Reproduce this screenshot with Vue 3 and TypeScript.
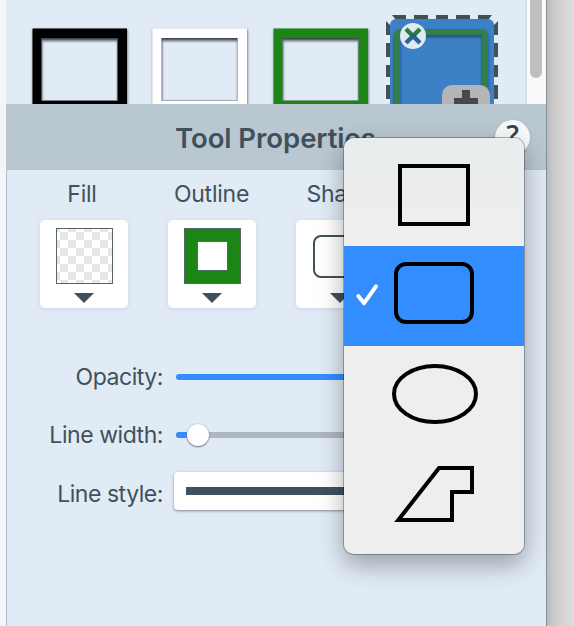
<script setup lang="ts">
import { ref } from 'vue'

type Shape = 'rectangle' | 'rounded' | 'ellipse' | 'polygon'

const shapes: Shape[] = ['rectangle', 'rounded', 'ellipse', 'polygon']
const selected = ref<Shape>('rounded')
const presets = ['#000000', '#ffffff', '#1b8516']
const lineWidth = ref(11)
</script>

<template>
  <div class="window">
    <main class="panel">
      <section class="tools">
        <div class="presets">
          <svg v-for="(color, i) in presets" :key="color" class="preset" viewBox="0 0 96 80">
            <defs>
              <filter :id="'soft' + i" x="-10%" y="-10%" width="120%" height="130%">
                <feDropShadow dx="0.5" dy="1" stdDeviation="0.8" flood-color="#111827" flood-opacity="0.65" />
              </filter>
              <linearGradient :id="'inner' + i" x1="0" y1="0" x2="0" y2="1">
                <stop offset="0" stop-color="#2e343c" stop-opacity="0.9" />
                <stop offset="0.35" stop-color="#4c545e" stop-opacity="0.75" />
                <stop offset="1" stop-color="#8b949e" stop-opacity="0" />
              </linearGradient>
            </defs>
            <path d="M.5 .5H95V82H.5ZM9.5 10V72.700H85.500V10Z" fill-rule="evenodd" :fill="color" :filter="`url(#soft${i})`" />
            <rect x="9.500" y="10" width="76" height="5.500" :fill="`url(#inner${i})`" />
            <path d="M9.800 10V72.500H85.300V10" fill="none" stroke="#59616b" stroke-opacity="0.45" />
          </svg>
          <svg class="active-preset" viewBox="0 0 112 89">
            <defs>
              <filter id="edge" x="-10%" y="-10%" width="120%" height="120%">
                <feDropShadow dx="0" dy="2" stdDeviation="1.700" flood-color="#16345a" flood-opacity="0.7" />
              </filter>
              <linearGradient id="cross" x1="0" y1="12" x2="0" y2="29" gradientUnits="userSpaceOnUse">
                <stop offset="0" stop-color="#2b7f3c" />
                <stop offset="0.35" stop-color="#2b7f3c" />
                <stop offset="0.5" stop-color="#2a5a80" />
                <stop offset="1" stop-color="#2f69a7" />
              </linearGradient>
            </defs>
            <g fill="#40515a">
              <path d="M6 0H20V5H10ZM28 0H42V5H28ZM50 0H62V5H50ZM70 0H84V5H70ZM92 0H106L102 5H92Z" />
              <path d="M0 6L5 11V20H0ZM0 28H5V42H0ZM0 50H5V62H0ZM0 70H5V84H0Z" />
              <path d="M112 6L107 11V20H112ZM112 28H107V42H112ZM112 50H107V62H112ZM112 70H107V84H112Z" />
            </g>
            <rect x="4" y="4" width="104" height="100" rx="6" fill="#3c80c6" />
            <rect x="11" y="17" width="88" height="92" rx="3" fill="none" stroke="#327f4d" stroke-width="6" filter="url(#edge)" />
            <circle cx="27" cy="21" r="13" fill="#e0eaf2" />
            <path d="M20 14L34 28M34 14L20 28" stroke="url(#cross)" stroke-width="4.500" />
            <rect x="56" y="70" width="48" height="40" rx="10" fill="#b5b5b5" />
            <path d="M68 83H76V75H84V83H92V90H68Z" fill="#484848" />
          </svg>
        </div>
        <div class="scroll-track"><div class="scroll-thumb"></div></div>
      </section>

      <header class="header">
        <h1>Tool Properties</h1>
        <button class="help" type="button">?</button>
      </header>

      <section class="properties">
        <div class="swatches">
          <div class="property">
            <span class="label label-fill">Fill</span>
            <div class="card">
              <div class="swatch checker"></div>
              <svg class="arrow" viewBox="0 0 20 10"><path d="M0 0H20L10 10Z" /></svg>
            </div>
          </div>
          <div class="property">
            <span class="label label-outline">Outline</span>
            <div class="card">
              <div class="swatch green"><div class="hole"></div></div>
              <svg class="arrow" viewBox="0 0 20 10"><path d="M0 0H20L10 10Z" /></svg>
            </div>
          </div>
          <div class="property">
            <span class="label label-shape">Shape</span>
            <div class="card">
              <div class="swatch shape-swatch"><div class="mini-shape"></div></div>
              <svg class="arrow" viewBox="0 0 20 10"><path d="M0 0H20L10 10Z" /></svg>
            </div>
          </div>
        </div>

        <div class="settings">
          <div class="row">
            <span class="label">Opacity:</span>
            <div class="slider full"></div>
          </div>
          <div class="row">
            <span class="label">Line width:</span>
            <div class="slider">
              <div class="slider-value" :style="{ width: lineWidth + 'px' }"></div>
              <div class="knob"></div>
            </div>
          </div>
          <div class="row style-row">
            <span class="label style-label">Line style:</span>
            <div class="select"><div class="line-sample"></div></div>
          </div>
        </div>
      </section>
    </main>
    <aside class="backdrop"></aside>

    <div class="menu">
      <div
        v-for="shape in shapes"
        :key="shape"
        class="item"
        :class="{ chosen: shape === selected }"
        @click="selected = shape"
      >
        <svg viewBox="0 0 180 100">
          <path v-if="shape === selected" class="check" d="M14.300 50L20.100 57.200L32 40.400" />
          <rect v-if="shape === 'rectangle'" x="56" y="20" width="68" height="58" />
          <rect v-else-if="shape === 'rounded'" x="52" y="18" width="76" height="58" rx="10" />
          <ellipse v-else-if="shape === 'ellipse'" cx="91" cy="48" rx="41" ry="28" />
          <path v-else d="M95 22H128V46H108V74H54.300Z" />
        </svg>
      </div>
    </div>
  </div>
</template>

<style>
body {
  margin: 0;
  overflow: hidden;
}
</style>

<style scoped>
* {
  box-sizing: border-box;
}
.window {
  position: relative;
  display: flex;
  width: 574px;
  height: 626px;
  padding-left: 6px;
  overflow: hidden;
  background: #f4f5f8;
  color: #40515c;
  font-family: Inter, 'Liberation Sans', sans-serif;
}
.panel {
  flex: none;
  width: 540px;
  background: #e1ebf6;
}
.backdrop {
  flex: 1;
  border-left: 1px solid #858c94;
  background: linear-gradient(90deg, #bdbdbd, #cecece 35%, #dedede);
}
.tools {
  display: flex;
  height: 104px;
  overflow: hidden;
}
.presets {
  display: flex;
  flex: 1;
  gap: 24.500px;
  padding: 28px 0 0 25.500px;
  overflow: hidden;
}
.preset {
  flex: none;
  width: 96px;
  height: 80px;
  overflow: visible;
}
.active-preset {
  flex: none;
  width: 112px;
  height: 89px;
  margin: -13px 0 0 -7px;
}
.scroll-track {
  display: flex;
  justify-content: center;
  width: 21px;
  padding-right: 1px;
  border-left: 2px solid #d9dee6;
  background: #fafafa;
}
.scroll-thumb {
  width: 12px;
  height: 78px;
  border-radius: 0 0 6px 6px;
  background: #bfbfbf;
}
.header {
  display: flex;
  align-items: center;
  justify-content: space-between;
  height: 66px;
  padding: 0 16px 0 169px;
  background: #b9c7d1;
}
h1 {
  margin: 0;
  padding-top: 2px;
  font-size: 27.500px;
  font-weight: 600;
  line-height: 34px;
  letter-spacing: -0.050px;
  white-space: nowrap;
}
.help {
  width: 35px;
  height: 35px;
  padding: 0 0 5px;
  border: 0;
  border-radius: 50%;
  background: #f7f9fb;
  box-shadow: 0 1px 3px #7d8c9a88;
  color: #34454e;
  font: 600 28px/28px 'Open Sans', sans-serif;
}
.properties {
  height: 456px;
  padding-top: 9px;
  border-left: 1px solid #aebfd0;
}
.swatches {
  display: flex;
  gap: 40px;
  padding-left: 33px;
}
.property {
  display: flex;
  flex-direction: column;
  gap: 11px;
  align-items: center;
  width: 88px;
}
.label {
  font-size: 23px;
  line-height: 30px;
  letter-spacing: -0.250px;
  white-space: nowrap;
}
.label-fill {
  margin-right: 4px;
}
.label-outline {
  margin-right: 1px;
}
.label-shape {
  letter-spacing: -0.400px;
}
.card {
  display: flex;
  flex-direction: column;
  align-items: center;
  gap: 9px;
  width: 88px;
  height: 88px;
  padding-top: 8px;
  border-radius: 5px;
  background: #fff;
  box-shadow: 0 1px 5px #8aa0b844;
}
.swatch {
  width: 57px;
  height: 56px;
  border: 1px solid #56646c;
}
.checker {
  background: repeating-conic-gradient(#fff 0 25%, #e6e6e6 0 50%) 3px 3px / 16px 16px;
}
.green {
  display: grid;
  place-items: center;
  background: #1b8516;
}
.hole {
  width: 31px;
  height: 30px;
  border: 1px solid #48705a;
  background: #fff;
}
.shape-swatch {
  display: grid;
  place-items: center;
  border: 0;
}
.mini-shape {
  width: 54px;
  height: 43px;
  border: 2.500px solid #40515c;
  border-radius: 8px;
}
.arrow {
  width: 20px;
  height: 10px;
  fill: #40515c;
}
.settings {
  display: flex;
  flex-direction: column;
  gap: 28px;
  padding: 54px 30px 0 0;
}
.row {
  display: grid;
  grid-template-columns: 156px 1fr;
  align-items: center;
  gap: 13px;
  height: 30px;
}
.row .label {
  letter-spacing: -0.450px;
  text-align: right;
}
.slider {
  display: flex;
  align-items: center;
  height: 6px;
  border-radius: 3px;
  background: #afb8bf;
}
.full {
  background: #348dff;
}
.slider-value {
  height: 6px;
  border-radius: 3px 0 0 3px;
  background: #348dff;
}
.knob {
  flex: none;
  width: 22px;
  height: 22px;
  border-radius: 50%;
  background: #fff;
  box-shadow: 0 1px 2px #6c747c, 0 0 1px #8d949b;
}
.style-row {
  gap: 11px;
  height: 38px;
  margin-top: -6px;
}
.style-label {
  padding-top: 6px;
}
.select {
  height: 38px;
  padding: 15px 12px;
  border-radius: 4px;
  background: #fff;
  box-shadow: 0 1px 3px #7f8995;
}
.line-sample {
  height: 8px;
  background: #40515c;
}
.menu {
  position: absolute;
  top: 138px;
  left: 344px;
  width: 180px;
  height: 416px;
  padding: 8px 0;
  border-radius: 10px;
  background: linear-gradient(#e9eded, #eee 25%);
  box-shadow: 0 0 0 1px #00000047, 0 10px 26px #00000057;
}
.item {
  height: 100px;
}
.item svg {
  display: block;
  width: 180px;
  height: 100px;
  fill: none;
  stroke: #000;
  stroke-width: 4;
}
.item .check {
  stroke: #fff;
  stroke-linecap: round;
  stroke-linejoin: round;
}
.chosen {
  background: #348dff;
}
</style>
